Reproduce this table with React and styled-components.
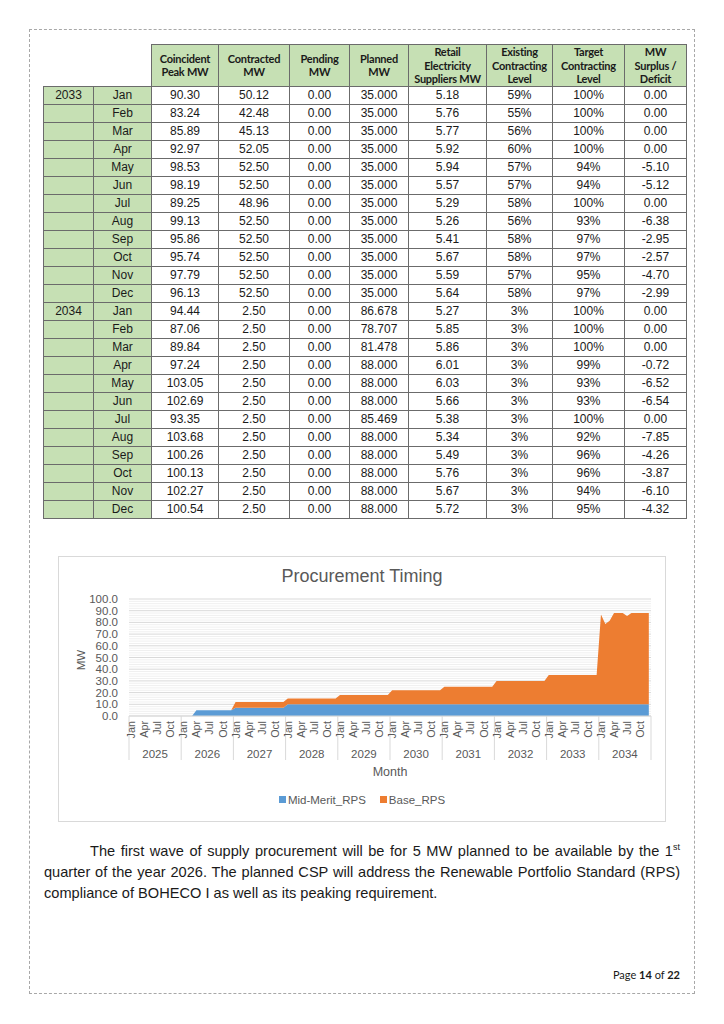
import React from "react";
import styled, { createGlobalStyle } from "styled-components";

const GlobalStyle = createGlobalStyle`
  body {
    margin: 0;
    background: #ffffff;
    font-family: "Liberation Sans", Arial, sans-serif;
    color: #1a1a1a;
  }
`;

const Page = styled.div`
  box-sizing: border-box;
  margin: 29px 0 0 29px;
  width: 666px;
  height: 965px;
  border: 1px dashed #a8a8a8;
  padding: 14px 0 12px 14px;
  display: flex;
  flex-direction: column;
`;

const Table = styled.table`
  border-collapse: collapse;
  margin-left: -1px;
  table-layout: fixed;
  width: 643px;
`;

const HeadCell = styled.th`
  background: #c6e0b4;
  border: 1px solid #6b6b6b;
  font-family: Lato, "Liberation Sans", sans-serif;
  font-weight: 700;
  font-size: 11px;
  line-height: 13.5px;
  letter-spacing: -0.25px;
  padding: 0 1px;
  height: 40px;
  color: #1a1a1a;
`;

const BlankCell = styled.th`
  border: none;
  background: transparent;
`;

const Row = styled.tr`
  height: 18px;
`;

const Cell = styled.td`
  border: 1px solid #6b6b6b;
  background: ${(p) => (p.$label ? "#c6e0b4" : "#ffffff")};
  font-size: 12px;
  text-align: center;
  padding: 0;
  line-height: 16px;
`;

const ChartBox = styled.div`
  box-sizing: border-box;
  margin: 37px 0 0 14px;
  width: 608px;
  height: 266px;
  border: 1px solid #d9d9d9;
  display: flex;
  flex-direction: column;
  align-items: center;
`;

const ChartTitle = styled.div`
  font-size: 18px;
  color: #595959;
  height: 35px;
  line-height: 38px;
`;

const Legend = styled.div`
  display: flex;
  gap: 14px;
  margin-top: 12px;
  font-size: 11.5px;
  color: #595959;
`;

const LegendItem = styled.span`
  display: flex;
  align-items: center;
  gap: 2px;
  &::before {
    content: "";
    width: 7px;
    height: 7px;
    background: ${(p) => p.$color};
  }
`;

const Paragraph = styled.p`
  margin: 19px 0 0;
  width: 636px;
  font-size: 14.6px;
  line-height: 21px;
  text-align: justify;
  text-indent: 46px;
  color: #1a1a1a;
  sup {
    font-size: 9px;
    line-height: 0;
  }
`;

const Footer = styled.div`
  margin-top: auto;
  width: 636px;
  text-align: right;
  font-family: Lato, "Liberation Sans", sans-serif;
  font-size: 11px;
  color: #1a1a1a;
  b {
    font-weight: 700;
  }
`;

const headers = [
  ["Coincident", "Peak MW"],
  ["Contracted", "MW"],
  ["Pending", "MW"],
  ["Planned", "MW"],
  ["Retail", "Electricity", "Suppliers MW"],
  ["Existing", "Contracting", "Level"],
  ["Target", "Contracting", "Level"],
  ["MW", "Surplus /", "Deficit"],
];

const widths = [50, 58, 67, 71, 60, 59, 78, 66, 72, 62];

const months = ["Jan", "Feb", "Mar", "Apr", "May", "Jun", "Jul", "Aug", "Sep", "Oct", "Nov", "Dec"];

const rows2033 = [
  ["90.30", "50.12", "0.00", "35.000", "5.18", "59%", "100%", "0.00"],
  ["83.24", "42.48", "0.00", "35.000", "5.76", "55%", "100%", "0.00"],
  ["85.89", "45.13", "0.00", "35.000", "5.77", "56%", "100%", "0.00"],
  ["92.97", "52.05", "0.00", "35.000", "5.92", "60%", "100%", "0.00"],
  ["98.53", "52.50", "0.00", "35.000", "5.94", "57%", "94%", "-5.10"],
  ["98.19", "52.50", "0.00", "35.000", "5.57", "57%", "94%", "-5.12"],
  ["89.25", "48.96", "0.00", "35.000", "5.29", "58%", "100%", "0.00"],
  ["99.13", "52.50", "0.00", "35.000", "5.26", "56%", "93%", "-6.38"],
  ["95.86", "52.50", "0.00", "35.000", "5.41", "58%", "97%", "-2.95"],
  ["95.74", "52.50", "0.00", "35.000", "5.67", "58%", "97%", "-2.57"],
  ["97.79", "52.50", "0.00", "35.000", "5.59", "57%", "95%", "-4.70"],
  ["96.13", "52.50", "0.00", "35.000", "5.64", "58%", "97%", "-2.99"],
];

const rows2034 = [
  ["94.44", "2.50", "0.00", "86.678", "5.27", "3%", "100%", "0.00"],
  ["87.06", "2.50", "0.00", "78.707", "5.85", "3%", "100%", "0.00"],
  ["89.84", "2.50", "0.00", "81.478", "5.86", "3%", "100%", "0.00"],
  ["97.24", "2.50", "0.00", "88.000", "6.01", "3%", "99%", "-0.72"],
  ["103.05", "2.50", "0.00", "88.000", "6.03", "3%", "93%", "-6.52"],
  ["102.69", "2.50", "0.00", "88.000", "5.66", "3%", "93%", "-6.54"],
  ["93.35", "2.50", "0.00", "85.469", "5.38", "3%", "100%", "0.00"],
  ["103.68", "2.50", "0.00", "88.000", "5.34", "3%", "92%", "-7.85"],
  ["100.26", "2.50", "0.00", "88.000", "5.49", "3%", "96%", "-4.26"],
  ["100.13", "2.50", "0.00", "88.000", "5.76", "3%", "96%", "-3.87"],
  ["102.27", "2.50", "0.00", "88.000", "5.67", "3%", "94%", "-6.10"],
  ["100.54", "2.50", "0.00", "88.000", "5.72", "3%", "95%", "-4.32"],
];

const yearBlocks = [
  { year: "2033", rows: rows2033 },
  { year: "2034", rows: rows2034 },
];

// chart data, month index 0 = Jan 2025
const totals2034 = [86.678, 78.707, 81.478, 88, 88, 88, 85.469, 88, 88, 88, 88, 88];
const yearTotals = { 2027: 12, 2028: 15, 2029: 18, 2030: 22, 2031: 25, 2032: 30, 2033: 35 };

const series = Array.from({ length: 120 }, (_, m) => {
  const year = 2025 + Math.floor(m / 12);
  const mo = m % 12;
  let mid = 0;
  let total = 0;
  if (year === 2026 && mo >= 3) {
    mid = 5;
    total = 5;
  } else if (year === 2027) {
    mid = 7;
    total = 12;
  } else if (year >= 2028 && year <= 2033) {
    mid = 10;
    total = yearTotals[year];
  } else if (year === 2034) {
    mid = 10;
    total = totals2034[mo];
  }
  return { mid, total };
});

const X0 = 71;
const X1 = 593;
const YT = 7;
const YB = 124;
const MW_ = (X1 - X0) / 120;
const YW = (X1 - X0) / 10;
const cx = (m) => X0 + (m + 0.5) * MW_;
const cy = (v) => YB - (v / 100) * (YB - YT);

const midPath = () => {
  let d = `M${cx(0)},${cy(0)}`;
  series.forEach((p, m) => (d += ` L${cx(m).toFixed(2)},${cy(p.mid).toFixed(2)}`));
  d += ` L${cx(119)},${cy(0)} Z`;
  return d;
};

const basePath = () => {
  let d = "";
  series.forEach((p, m) => (d += `${m ? " L" : "M"}${cx(m).toFixed(2)},${cy(p.total).toFixed(2)}`));
  for (let m = 119; m >= 0; m--) d += ` L${cx(m).toFixed(2)},${cy(series[m].mid).toFixed(2)}`;
  return d + " Z";
};

const Chart = () => {
  const grid = [];
  for (let v = 0; v <= 100; v += 2) {
    grid.push(
      <line
        key={v}
        x1={X0}
        x2={X1}
        y1={cy(v)}
        y2={cy(v)}
        stroke={v % 10 === 0 ? "#d9d9d9" : "#f0f0f0"}
        strokeWidth="1"
      />
    );
  }
  const years = Array.from({ length: 10 }, (_, i) => 2025 + i);
  return (
    <svg width="608" height="190" viewBox="0 0 608 190" fontFamily="'Liberation Sans', Arial, sans-serif" fill="#595959">
      {grid}
      <path d={midPath()} fill="#5b9bd5" />
      <path d={basePath()} fill="#ed7d31" />
      <line x1={X0} x2={X1} y1={YB} y2={YB} stroke="#d9d9d9" />
      {Array.from({ length: 11 }, (_, i) => (
        <line key={i} x1={X0 + i * YW} x2={X0 + i * YW} y1={YB} y2={168} stroke="#d9d9d9" />
      ))}
      {Array.from({ length: 11 }, (_, i) => (
        <text key={i} x="60" y={cy(i * 10) + 4} fontSize="11.5" textAnchor="end">
          {(i * 10).toFixed(1)}
        </text>
      ))}
      <text x="27" y="68" fontSize="11.5" textAnchor="middle" transform="rotate(-90 27 68)">
        MW
      </text>
      {years.map((y, i) =>
        [0, 3, 6, 9].map((j) => {
          const x = cx(i * 12 + j) + 4;
          return (
            <text key={`${y}-${j}`} x={x} y={129} fontSize="10.8" textAnchor="end" transform={`rotate(-90 ${x} 129)`}>
              {months[j]}
            </text>
          );
        })
      )}
      {years.map((y, i) => (
        <text key={y} x={X0 + (i + 0.5) * YW} y={166} fontSize="11.5" textAnchor="middle">
          {y}
        </text>
      ))}
      <text x={(X0 + X1) / 2} y={184} fontSize="12.5" textAnchor="middle">
        Month
      </text>
    </svg>
  );
};

export default function App() {
  return (
    <>
      <GlobalStyle />
      <Page>
        <Table>
          <colgroup>
            {widths.map((w, i) => (
              <col key={i} style={{ width: w }} />
            ))}
          </colgroup>
          <thead>
            <tr>
              <BlankCell />
              <BlankCell />
              {headers.map((h, i) => (
                <HeadCell key={i}>
                  {h.map((line, j) => (
                    <div key={j}>{line}</div>
                  ))}
                </HeadCell>
              ))}
            </tr>
          </thead>
          <tbody>
            {yearBlocks.map((b) =>
              b.rows.map((r, i) => (
                <Row key={b.year + i}>
                  <Cell $label>{i === 0 ? b.year : ""}</Cell>
                  <Cell $label>{months[i]}</Cell>
                  {r.map((v, j) => (
                    <Cell key={j}>{v}</Cell>
                  ))}
                </Row>
              ))
            )}
          </tbody>
        </Table>

        <ChartBox>
          <ChartTitle>Procurement Timing</ChartTitle>
          <Chart />
          <Legend>
            <LegendItem $color="#5b9bd5">Mid-Merit_RPS</LegendItem>
            <LegendItem $color="#ed7d31">Base_RPS</LegendItem>
          </Legend>
        </ChartBox>

        <Paragraph>
          The first wave of supply procurement will be for 5 MW planned to be available by the 1<sup>st</sup> quarter
          of the year 2026. The planned CSP will address the Renewable Portfolio Standard (RPS) compliance of BOHECO I
          as well as its peaking requirement.
        </Paragraph>

        <Footer>
          Page <b>14</b> of <b>22</b>
        </Footer>
      </Page>
    </>
  );
}
